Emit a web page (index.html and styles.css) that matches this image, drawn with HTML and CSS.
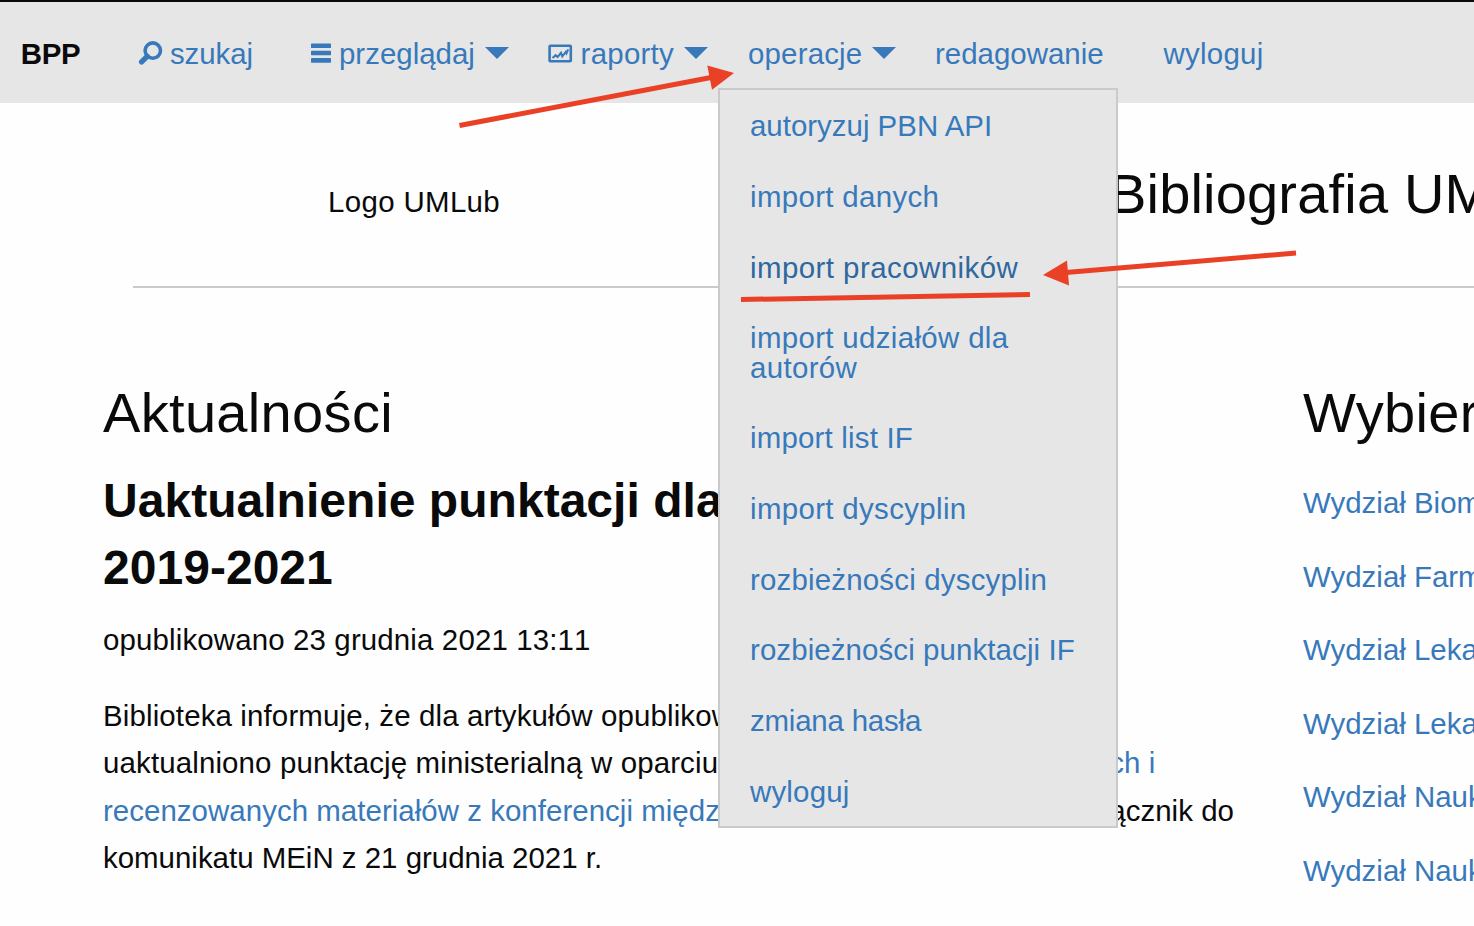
FILE: index.html
```html
<!DOCTYPE html>
<html lang="pl">
<head>
<meta charset="utf-8">
<title>Bibliografia UMLub</title>
<link rel="stylesheet" href="styles.css">
</head>
<body>
<nav class="topbar">
  <strong class="brand">BPP</strong>
  <a class="item search"><svg class="icon" width="24" height="24" viewBox="0 0 24 24"><circle cx="14.8" cy="9.6" r="7.7" fill="none" stroke="currentColor" stroke-width="3.6"/><path d="M9.200 15.400 3.600 20.900" stroke="currentColor" stroke-width="5.400" stroke-linecap="round"/></svg><span class="label">szukaj</span></a>
  <a class="item browse"><svg class="icon" width="20" height="24" viewBox="0 0 20 24"><g fill="currentColor"><rect y="2.4" width="20" height="4.7" rx=".7"/><rect y="9.800" width="20" height="4.500" rx=".7"/><rect y="17" width="20" height="4.700" rx=".7"/></g></svg><span class="label">przeglądaj</span><i class="caret"></i></a>
  <a class="item reports"><svg class="icon" width="24" height="24" viewBox="0 0 24 24"><rect x="1.600" y="4.800" width="21.200" height="15.400" rx=".8" fill="none" stroke="currentColor" stroke-width="2.600"/><path d="M4.500 16.900 7.600 14.200 9.600 16 13 11.800 14.300 15.400 17.800 10.800 18.500 12.300 20.200 8.400" fill="none" stroke="currentColor" stroke-width="2"/></svg><span class="label">raporty</span><i class="caret"></i></a>
  <div class="item operations">
    <a class="label">operacje</a><i class="caret"></i>
    <ul class="menu">
      <li>autoryzuj PBN API</li>
      <li class="wide">import danych</li>
      <li class="wider active">import pracowników</li>
      <li class="wide">import udziałów dla autorów</li>
      <li class="loose">import list IF</li>
      <li class="wide">import dyscyplin</li>
      <li class="loose">rozbieżności dyscyplin</li>
      <li class="snug">rozbieżności punktacji IF</li>
      <li class="tight">zmiana hasła</li>
      <li class="loose">wyloguj</li>
    </ul>
  </div>
  <a class="item"><span class="label">redagowanie</span></a>
  <a class="item logout"><span class="label">wyloguj</span></a>
</nav>
<header class="masthead">
  <div class="logo">Logo UMLub</div>
  <h1 class="title">Bibliografia UMLub</h1>
</header>
<main class="columns">
  <section class="news">
    <h2 class="heading">Aktualności</h2>
    <h3 class="headline">Uaktualnienie punktacji dla<br>2019-2021</h3>
    <p class="date">opublikowano 23 grudnia 2021 13:11</p>
    <div class="body">
      <div class="line line-spaced">Biblioteka informuje, że dla artykułów opublikowanych</div>
      <div class="line line-spaced line-mid"><span>uaktualniono punktację ministerialną w oparciu o</span><a>wykaz czasopism naukowych i</a></div>
      <div class="line line-full"><a>recenzowanych materiałów z konferencji międzynarodowych</a><span>stanowiący załącznik do</span></div>
      <div class="line">komunikatu MEiN z 21 grudnia 2021 r.</div>
    </div>
  </section>
  <aside class="faculties">
    <h2 class="heading">Wybierz</h2>
    <ul class="list">
      <li>Wydział Biomedyczny</li>
      <li>Wydział Farmaceutyczny</li>
      <li>Wydział Lekarski</li>
      <li>Wydział Lekarsko-Dentystyczny</li>
      <li>Wydział Nauk Medycznych</li>
      <li>Wydział Nauk o Zdrowiu</li>
    </ul>
  </aside>
</main>
<svg class="marks" width="1474" height="926" viewBox="0 0 1474 926">
  <g stroke="#ea4025" stroke-width="5" fill="none"><path d="M459.500 125.500 711 77.500"/><path d="M1296 253 1066 272.500"/><path d="M741 299.500 1030 294.500"/></g>
  <g fill="#ea4025"><path d="M734 73 707.300 65.500 712 89.700z"/><path d="M1043 275 1067 260.500 1069 285.500z"/></g>
</svg>
</body>
</html>
```
FILE: styles.css
```css
* { box-sizing: border-box; }
html { overflow: hidden; }
body {
  margin: 0;
  width: 1474px;
  height: 926px;
  overflow: hidden;
  background: #fefefe;
  color: #0a0a0a;
  font: 29.44px/1.6 "Liberation Sans", Arial, sans-serif;
  white-space: nowrap;
}
h1, h2, h3, p, ul { margin: 0; padding: 0; }
ul { list-style: none; }
a, li { color: #3779ba; }

.topbar {
  display: grid;
  grid-template-columns: 118px 173px 237px 200px 187px 228.500px auto;
  height: 103px;
  padding-left: 20px;
  border-top: 2px solid #0a0a0a;
  background: #e6e6e6;
  line-height: 104px;
}
.brand { padding-left: .8px; letter-spacing: -.4px; }
.item { display: flex; align-items: center; height: 104px; }
.icon { margin-right: 8px; flex: none; overflow: visible; }
.search .icon { margin-top: -2px; }
.search .label { letter-spacing: -.1px; }
.browse .icon { margin-top: -2px; }
.reports .icon { margin-top: -3px; margin-right: 8.600px; }
.reports .label, .logout .label { letter-spacing: .25px; }
.operations .label { letter-spacing: .18px; }
.caret {
  margin: -2px 0 0 10px;
  border: 12px solid transparent;
  border-top-color: currentColor;
  border-bottom-width: 0;
  color: #3779ba;
}
.operations { position: relative; }
.menu {
  position: absolute;
  z-index: 2;
  top: 86px;
  left: -30px;
  width: 400px;
  height: 740px;
  padding-top: .9px;
  border: 2px solid #cacaca;
  background: #e6e6e6;
  line-height: 1;
  white-space: normal;
}
.menu li { padding: 20.600px 30px; }
.menu .active { color: #2f689e; }
.menu .wide { letter-spacing: .34px; }
.menu .wider { letter-spacing: .45px; }
.menu .loose { letter-spacing: .19px; }
.menu .snug { letter-spacing: .1px; }
.menu .tight { letter-spacing: -.2px; }

.masthead {
  display: flex;
  height: 185px;
  margin-left: 133px;
  padding-left: 195px;
  border-bottom: 2px solid #cacaca;
}
.logo { flex: none; width: 781px; padding-top: 75px; letter-spacing: .35px; }
.title {
  flex: none;
  width: 365px;
  overflow: hidden;
  padding-top: 52px;
  font-size: 56px;
  font-weight: 400;
  line-height: 78px;
  letter-spacing: .18px;
}

.columns { display: grid; grid-template-columns: 1200px 171px; padding: 86px 0 0 103px; }
.heading { font-size: 56px; font-weight: 400; line-height: 78px; letter-spacing: .33px; }
.headline { margin-top: 15px; font-size: 48px; line-height: 67px; letter-spacing: .03px; }
.date { margin-top: 15px; font-kerning: none; letter-spacing: .14px; }
.body { margin-top: 29px; line-height: 47.300px; }
.line { display: flex; justify-content: space-between; }
.line-spaced { letter-spacing: .14px; }
.line-mid { width: 1052.500px; }
.line-full { width: 1131px; letter-spacing: .04px; }
.faculties { overflow: hidden; }
.list { margin-top: 14px; }
.list li { line-height: 73.600px; }

.marks { position: absolute; z-index: 3; top: 0; left: 0; pointer-events: none; }
```
